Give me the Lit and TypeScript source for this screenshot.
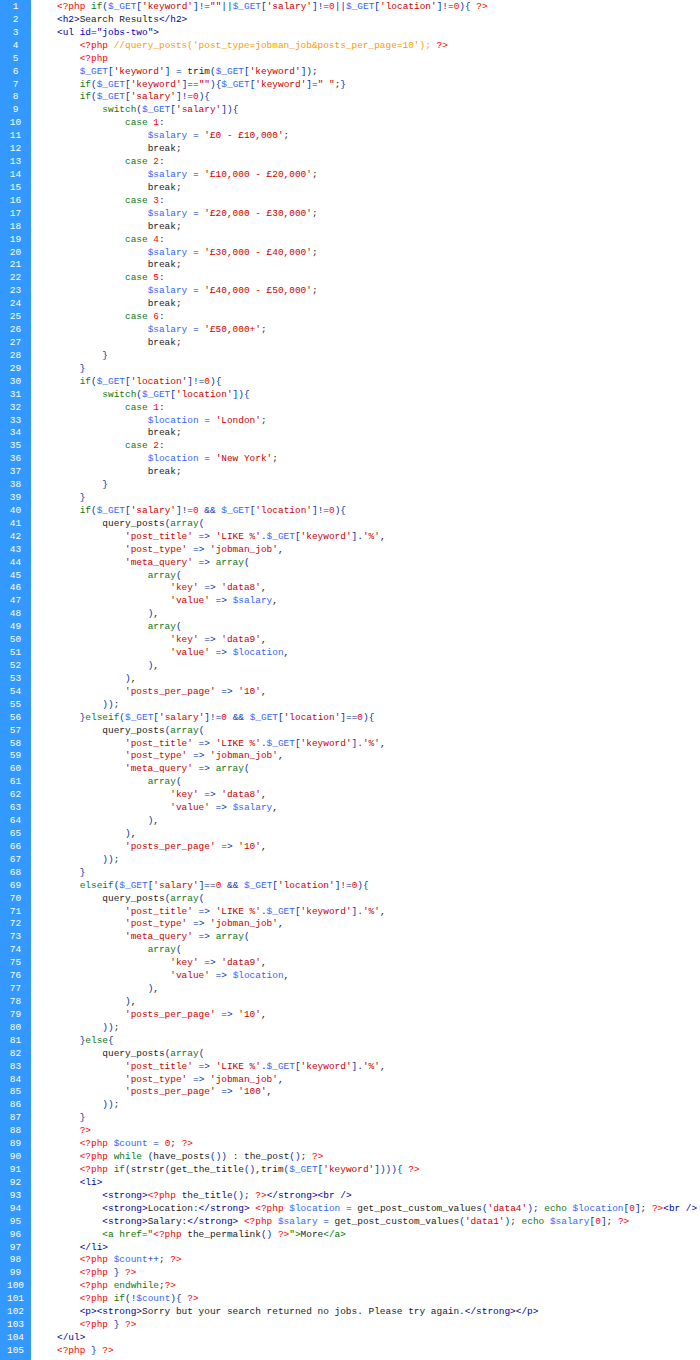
import { LitElement, html, css } from "lit";
import { customElement } from "lit/decorators.js";

const SOURCE = `<?php if($_GET['keyword']!=""||$_GET['salary']!=0||$_GET['location']!=0){ ?>
<h2>Search Results</h2>
<ul id="jobs-two">
    <?php //query_posts('post_type=jobman_job&posts_per_page=10'); ?>
    <?php
    $_GET['keyword'] = trim($_GET['keyword']);
    if($_GET['keyword']==""){$_GET['keyword']=" ";}
    if($_GET['salary']!=0){
        switch($_GET['salary']){
            case 1:
                $salary = '£0 - £10,000';
                break;
            case 2:
                $salary = '£10,000 - £20,000';
                break;
            case 3:
                $salary = '£20,000 - £30,000';
                break;
            case 4:
                $salary = '£30,000 - £40,000';
                break;
            case 5:
                $salary = '£40,000 - £50,000';
                break;
            case 6:
                $salary = '£50,000+';
                break;
        }
    }
    if($_GET['location']!=0){
        switch($_GET['location']){
            case 1:
                $location = 'London';
                break;
            case 2:
                $location = 'New York';
                break;
        }
    }
    if($_GET['salary']!=0 && $_GET['location']!=0){
        query_posts(array(
            'post_title' => 'LIKE %'.$_GET['keyword'].'%',
            'post_type' => 'jobman_job',
            'meta_query' => array(
                array(
                    'key' => 'data8',
                    'value' => $salary,
                ),
                array(
                    'key' => 'data9',
                    'value' => $location,
                ),
            ),
            'posts_per_page' => '10',
        ));
    }elseif($_GET['salary']!=0 && $_GET['location']==0){
        query_posts(array(
            'post_title' => 'LIKE %'.$_GET['keyword'].'%',
            'post_type' => 'jobman_job',
            'meta_query' => array(
                array(
                    'key' => 'data8',
                    'value' => $salary,
                ),
            ),
            'posts_per_page' => '10',
        ));
    }
    elseif($_GET['salary']==0 && $_GET['location']!=0){
        query_posts(array(
            'post_title' => 'LIKE %'.$_GET['keyword'].'%',
            'post_type' => 'jobman_job',
            'meta_query' => array(
                array(
                    'key' => 'data9',
                    'value' => $location,
                ),
            ),
            'posts_per_page' => '10',
        ));
    }else{
        query_posts(array(
            'post_title' => 'LIKE %'.$_GET['keyword'].'%',
            'post_type' => 'jobman_job',
            'posts_per_page' => '100',
        ));
    }
    ?>
    <?php $count = 0; ?>
    <?php while (have_posts()) : the_post(); ?>
    <?php if(strstr(get_the_title(),trim($_GET['keyword']))){ ?>
    <li>
        <strong><?php the_title(); ?></strong><br />
        <strong>Location:</strong> <?php $location = get_post_custom_values('data4'); echo $location[0]; ?><br />
        <strong>Salary:</strong> <?php $salary = get_post_custom_values('data1'); echo $salary[0]; ?>
        <a href="<?php the_permalink() ?>">More</a>
    </li>
    <?php $count++; ?>
    <?php } ?>
    <?php endwhile;?>
    <?php if(!$count){ ?>
    <p><strong>Sorry but your search returned no jobs. Please try again.</strong></p>
    <?php } ?>
</ul>
<?php } ?>`;

type Tok = { t: string; c: string };

const KEYWORDS = new Set([
  "if", "elseif", "else", "switch", "case", "while", "endwhile", "echo", "array",
]);

function tokenize(src: string): Tok[][] {
  let inPhp = false;
  let inAnchor = false;
  return src.split("\n").map((line) => {
    const out: Tok[] = [];
    let rest = line;
    const take = (n: number, c: string) => {
      out.push({ t: rest.slice(0, n), c });
      rest = rest.slice(n);
    };
    while (rest.length) {
      if (!inPhp) {
        if (rest.startsWith("<?php")) {
          take(5, "php");
          inPhp = true;
        } else if (rest.startsWith('<a href="')) {
          take(9, "anchor");
          inAnchor = true;
        } else if (inAnchor && rest.startsWith('">')) {
          take(2, "anchor");
          inAnchor = false;
        } else if (rest.startsWith("</a>")) {
          take(4, "anchor");
        } else if (rest.startsWith('<ul id="')) {
          take(3, "tag");
          take(4, "attr");
          take(1, "attr");
        } else if (rest.startsWith('jobs-two">')) {
          take(9, "attr");
          take(1, "tag");
        } else {
          const tag = rest.match(/^<[^>]*>/);
          if (tag) take(tag[0].length, "tag");
          else {
            const text = rest.match(/^[^<"]+|^./);
            take(text![0].length, "text");
          }
        }
        continue;
      }
      if (rest.startsWith("?>")) {
        take(2, "php");
        inPhp = false;
        continue;
      }
      if (rest.startsWith("//")) {
        const end = rest.indexOf(" ?>");
        take(end < 0 ? rest.length : end, "comment");
        continue;
      }
      const str = rest.match(/^'[^']*'|^"[^"]*"/);
      if (str) {
        take(str[0].length, "str");
        continue;
      }
      const variable = rest.match(/^\$\w+/);
      if (variable) {
        take(variable[0].length, "var");
        continue;
      }
      const word = rest.match(/^[A-Za-z_]\w*/);
      if (word) {
        take(word[0].length, KEYWORDS.has(word[0]) ? "kw" : "text");
        continue;
      }
      const num = rest.match(/^\d+/);
      if (num) {
        take(num[0].length, "num");
        continue;
      }
      const space = rest.match(/^\s+/);
      if (space) {
        take(space[0].length, "text");
        continue;
      }
      take(1, ";,:".includes(rest[0]) ? "text" : "op");
    }
    return out;
  });
}

const LINES = tokenize(SOURCE);

@customElement("app-root")
export class AppRoot extends LitElement {
  static styles = css`
    :host {
      display: block;
      width: 700px;
      height: 1360px;
      overflow: hidden;
      background: #ffffff;
      font-family: "Liberation Mono", "Courier New", monospace;
      font-size: 9.45px;
      line-height: 12.935px;
    }
    .sheet {
      display: flex;
      height: 100%;
    }
    .gutter {
      flex: 0 0 31px;
      padding-top: 1px;
      background: #3399ff;
      color: #ffffff;
      text-align: center;
    }
    .code {
      flex: 1;
      min-width: 0;
      padding: 1px 0 0 26px;
      color: #222222;
    }
    .line {
      height: 12.935px;
      white-space: pre;
    }
    .num {
      height: 12.935px;
    }
    .php { color: #ff0000; }
    .tag { color: #000099; }
    .attr { color: #0000cc; }
    .anchor { color: #007700; }
    .comment { color: #ff9900; }
    .str { color: #cc0000; }
    .var { color: #3366ff; }
    .kw { color: #117711; }
    .num-lit { color: #ff0000; }
    .op { color: #0033aa; }
    .text { color: #222222; }
  `;

  render() {
    return html`
      <div class="sheet">
        <div class="gutter">
          ${LINES.map((_, i) => html`<div class="num">${i + 1}</div>`)}
        </div>
        <div class="code">
          ${LINES.map(
            (toks) => html`<div class="line">${toks.map(
              (k) => html`<span class=${k.c === "num" ? "num-lit" : k.c}>${k.t}</span>`
            )}</div>`
          )}
        </div>
      </div>
    `;
  }
}
